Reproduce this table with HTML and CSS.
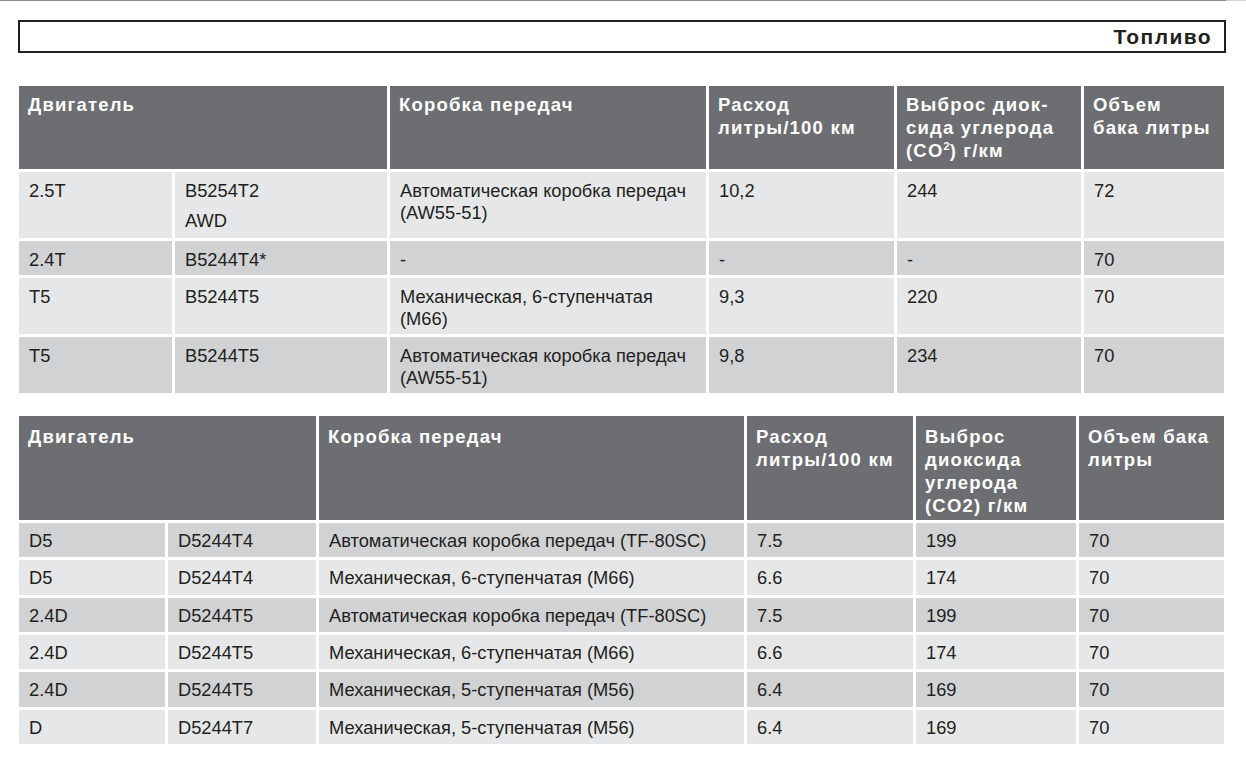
FILE: index.html
```html
<!DOCTYPE html>
<html lang="ru">
<head>
<meta charset="utf-8">
<title>Топливо</title>
<link rel="stylesheet" href="styles.css">
</head>
<body>
<div class="topline"></div>
<main class="page">
  <div class="title"><span>Топливо</span></div>

  <section class="tbl t1">
    <div class="th span2">Двигатель</div>
    <div class="th">Коробка передач</div>
    <div class="th">Расход<br>литры/100 км</div>
    <div class="th">Выброс диок-<br>сида углерода<br>(CO<sup>2</sup>) г/км</div>
    <div class="th">Объем<br>бака литры</div>

    <div class="td lt">2.5T</div>
    <div class="td lt"><div>B5254T2</div><div class="sub">AWD</div></div>
    <div class="td lt">Автоматическая коробка передач<br>(AW55-51)</div>
    <div class="td lt">10,2</div>
    <div class="td lt">244</div>
    <div class="td lt">72</div>

    <div class="td dk">2.4T</div>
    <div class="td dk">B5244T4*</div>
    <div class="td dk">-</div>
    <div class="td dk">-</div>
    <div class="td dk">-</div>
    <div class="td dk">70</div>

    <div class="td lt">T5</div>
    <div class="td lt">B5244T5</div>
    <div class="td lt">Механическая, 6-ступенчатая<br>(M66)</div>
    <div class="td lt">9,3</div>
    <div class="td lt">220</div>
    <div class="td lt">70</div>

    <div class="td dk">T5</div>
    <div class="td dk">B5244T5</div>
    <div class="td dk">Автоматическая коробка передач<br>(AW55-51)</div>
    <div class="td dk">9,8</div>
    <div class="td dk">234</div>
    <div class="td dk">70</div>
  </section>

  <section class="tbl t2">
    <div class="th span2">Двигатель</div>
    <div class="th">Коробка передач</div>
    <div class="th">Расход<br>литры/100 км</div>
    <div class="th">Выброс<br>диоксида<br>углерода<br>(CO2) г/км</div>
    <div class="th">Объем бака<br>литры</div>

    <div class="td dk">D5</div>
    <div class="td dk">D5244T4</div>
    <div class="td dk">Автоматическая коробка передач (TF-80SC)</div>
    <div class="td dk">7.5</div>
    <div class="td dk">199</div>
    <div class="td dk">70</div>

    <div class="td lt">D5</div>
    <div class="td lt">D5244T4</div>
    <div class="td lt">Механическая, 6-ступенчатая (M66)</div>
    <div class="td lt">6.6</div>
    <div class="td lt">174</div>
    <div class="td lt">70</div>

    <div class="td dk">2.4D</div>
    <div class="td dk">D5244T5</div>
    <div class="td dk">Автоматическая коробка передач (TF-80SC)</div>
    <div class="td dk">7.5</div>
    <div class="td dk">199</div>
    <div class="td dk">70</div>

    <div class="td lt">2.4D</div>
    <div class="td lt">D5244T5</div>
    <div class="td lt">Механическая, 6-ступенчатая (M66)</div>
    <div class="td lt">6.6</div>
    <div class="td lt">174</div>
    <div class="td lt">70</div>

    <div class="td dk">2.4D</div>
    <div class="td dk">D5244T5</div>
    <div class="td dk">Механическая, 5-ступенчатая (M56)</div>
    <div class="td dk">6.4</div>
    <div class="td dk">169</div>
    <div class="td dk">70</div>

    <div class="td lt">D</div>
    <div class="td lt">D5244T7</div>
    <div class="td lt">Механическая, 5-ступенчатая (M56)</div>
    <div class="td lt">6.4</div>
    <div class="td lt">169</div>
    <div class="td lt">70</div>
  </section>
</main>
</body>
</html>
```
FILE: styles.css
```css
html, body {
  margin: 0;
  padding: 0;
  background: #ffffff;
}

body {
  font-family: "Liberation Sans", Arial, sans-serif;
  color: #231f20;
  width: 1246px;
  height: 768px;
  overflow: hidden;
}

.topline {
  height: 1px;
  background: linear-gradient(to right, #8c8c8c 0, #8c8c8c 1226px, #d6d6d6 1226px);
}

.page {
  padding: 19px 0 0 18px;
}

.title {
  box-sizing: border-box;
  width: 1208px;
  height: 33px;
  border: 2px solid #231f20;
  display: flex;
  align-items: center;
  justify-content: flex-end;
  padding-right: 12px;
  font-weight: bold;
  font-size: 21px;
  letter-spacing: 1.4px;
}

.tbl {
  display: grid;
  gap: 3px;
  width: 1205px;
  margin-left: 1px;
  font-size: 18.3px;
  line-height: 22px;
}

.t1 {
  margin-top: 33px;
  grid-template-columns: 153px 212px 316px 185px 184px 140px;
  grid-template-rows: 83px 66px 34px 56px 56px;
}

.t2 {
  margin-top: 23px;
  grid-template-columns: 146px 148px 425px 166px 160px 145px;
  grid-template-rows: 104px;
  grid-auto-rows: 34.33px;
}

.th {
  background: #6d6e71;
  color: #ffffff;
  font-weight: bold;
  font-size: 18.5px;
  letter-spacing: 1.2px;
  line-height: 23px;
  white-space: nowrap;
  padding: 7px 6px 0 9px;
}

.t2 .th {
  padding-top: 9px;
}

.span2 {
  grid-column: span 2;
}

.td {
  padding: 8px 6px 0 10px;
  white-space: nowrap;
}

.t2 .td {
  padding-top: 7px;
}

.lt {
  background: #e6e7e8;
}

.dk {
  background: #d1d2d4;
}

.sub {
  margin-top: 8px;
}

sup {
  font-size: 11px;
  line-height: 0;
  vertical-align: 7px;
  letter-spacing: 0;
}
```
